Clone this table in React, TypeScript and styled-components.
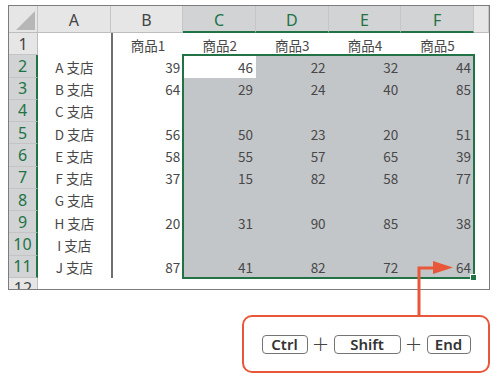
import React from 'react';
import styled, { createGlobalStyle } from 'styled-components';

const GREEN = '#217346';
const ORANGE = '#e9573b';

type Value = string | number | '';

const COLUMNS = ['A', 'B', 'C', 'D', 'E', 'F'];

const ROWS: Value[][] = [
  ['', '商品1', '商品2', '商品3', '商品4', '商品5'],
  ['A 支店', 39, 46, 22, 32, 44],
  ['B 支店', 64, 29, 24, 40, 85],
  ['C 支店', '', '', '', '', ''],
  ['D 支店', 56, 50, 23, 20, 51],
  ['E 支店', 58, 55, 57, 65, 39],
  ['F 支店', 37, 15, 82, 58, 77],
  ['G 支店', '', '', '', '', ''],
  ['H 支店', 20, 31, 90, 85, 38],
  ['I 支店', '', '', '', '', ''],
  ['J 支店', 87, 41, 82, 72, 64],
];

// selected range C2:F11 (column index 2..5, row 2..11), active cell C2
const inSelection = (row: number, col: number) => row >= 2 && row <= 11 && col >= 2;

const GlobalStyle = createGlobalStyle`
  html, body {
    margin: 0;
    padding: 0;
    background: #fff;
  }
  body {
    font-family: "Noto Sans", "Noto Sans CJK JP", sans-serif;
  }
`;

const Page = styled.div`
  position: relative;
  width: 500px;
  height: 385px;
  box-sizing: border-box;
  padding: 5px 10px 0 8px;
  display: flex;
  flex-direction: column;
`;

const Sheet = styled.div`
  position: relative;
  display: grid;
  grid-template-columns: 29px repeat(6, 72.67px) 1fr;
  grid-template-rows: 27px repeat(11, 22.27px) 1fr;
  height: 285px;
  box-sizing: border-box;
  border: 1px solid #7c7c7c;
  overflow: hidden;
  background: #fff;
  font-family: "Noto Sans CJK JP", sans-serif;
  color: #484848;
`;

const Corner = styled.div`
  display: flex;
  justify-content: flex-end;
  align-items: flex-end;
  padding: 0 2px 2px 0;
  background: #e6e6e6;
  border-right: 1px solid #c4c4c4;
  border-bottom: 1px solid #bdbdbd;

  &::after {
    content: '';
    width: 19px;
    height: 19px;
    background: #b7b7b7;
    clip-path: polygon(100% 0, 100% 100%, 0 100%);
  }
`;

const ColHead = styled.div<{ $active?: boolean }>`
  display: flex;
  align-items: center;
  justify-content: center;
  padding-top: 2px;
  font-family: "Noto Sans", sans-serif;
  font-size: 16px;
  background: ${p => (p.$active ? '#d2d3d4' : '#e6e6e6')};
  color: ${p => (p.$active ? GREEN : '#444')};
  border-right: 1px solid #c6c6c6;
  border-bottom: ${p => (p.$active ? `2px solid ${GREEN}` : '1px solid #bdbdbd')};
`;

const RowHead = styled.div<{ $active?: boolean }>`
  display: flex;
  align-items: center;
  justify-content: center;
  font-family: "Noto Sans", sans-serif;
  font-size: 16px;
  background: ${p => (p.$active ? '#d2d3d4' : '#e6e6e6')};
  color: ${p => (p.$active ? GREEN : '#444')};
  border-right: ${p => (p.$active ? `2px solid ${GREEN}` : '1px solid #bdbdbd')};
  border-bottom: 1px solid #c4c4c4;
`;

/* the last row is only partly in view */
const CutRowHead = styled(RowHead)`
  align-items: flex-start;
  line-height: 16px;
  padding-top: 2px;
`;

const Cell = styled.div<{ $align: 'center' | 'right'; $fill?: boolean; $edge?: boolean }>`
  display: flex;
  align-items: center;
  justify-content: ${p => (p.$align === 'right' ? 'flex-end' : 'center')};
  padding: 1px 3px 0 3px;
  font-size: 13.5px;
  background: ${p => (p.$fill ? '#c3c6c9' : '#fff')};
  border-left: ${p => (p.$edge ? '2px solid #6e6e6e' : 'none')};
`;

const Filler = styled.div`
  background: #fff;
  grid-column: 2 / -1;
`;

/* selection outline, laid over the grid area C2:F11 */
const Frame = styled.div`
  position: absolute;
  grid-column: 4 / 8;
  grid-row: 3 / 13;
  inset: -1px;
  border: 2px solid ${GREEN};
  pointer-events: none;
`;

const Handle = styled.span`
  position: absolute;
  right: -4px;
  bottom: -4px;
  width: 5px;
  height: 5px;
  background: ${GREEN};
  border: 1px solid #fff;
`;

const Callout = styled.div`
  align-self: flex-end;
  margin-top: 25px;
  width: 248px;
  height: 58px;
  box-sizing: border-box;
  border: 2px solid ${ORANGE};
  border-radius: 10px;
  display: flex;
  align-items: center;
  justify-content: center;
  padding-top: 1px;
`;

const Key = styled.span<{ $w: number }>`
  width: ${p => p.$w}px;
  height: 19px;
  box-sizing: border-box;
  border: 1.5px solid #747474;
  border-radius: 4px;
  display: flex;
  align-items: center;
  justify-content: center;
  font-family: "Noto Sans", sans-serif;
  font-weight: 600;
  font-size: 15px;
  color: #333;
  line-height: 1;
`;

const Plus = styled.span`
  width: 26px;
  display: flex;
  align-items: center;
  justify-content: center;
  height: 19px;
  font-family: "DejaVu Sans", sans-serif;
  font-size: 21px;
  font-weight: 300;
  color: #444;
  line-height: 1;
`;

const Connector = styled.svg`
  position: absolute;
  left: 0;
  top: 0;
  width: 500px;
  height: 385px;
  pointer-events: none;
`;

export default function App() {
  return (
    <>
      <GlobalStyle />
      <Page>
        <Sheet>
          <Corner />
          {COLUMNS.map((c, i) => (
            <ColHead key={c} $active={i >= 2}>{c}</ColHead>
          ))}
          <ColHead />

          {ROWS.map((row, r) => {
            const rowNo = r + 1;
            return (
              <React.Fragment key={rowNo}>
                <RowHead $active={rowNo >= 2}>{rowNo}</RowHead>
                {row.map((v, c) => (
                  <Cell
                    key={c}
                    $align={rowNo === 1 || c === 0 ? 'center' : 'right'}
                    $fill={inSelection(rowNo, c) && !(rowNo === 2 && c === 2)}
                    $edge={c === 1}
                  >
                    {v}
                  </Cell>
                ))}
                <Cell $align="center" />
              </React.Fragment>
            );
          })}

          <CutRowHead>12</CutRowHead>
          <Filler />

          <Frame>
            <Handle />
          </Frame>
        </Sheet>

        <Callout>
          <Key $w={46}>Ctrl</Key>
          <Plus>+</Plus>
          <Key $w={67}>Shift</Key>
          <Plus>+</Plus>
          <Key $w={44}>End</Key>
        </Callout>

        <Connector viewBox="0 0 500 385">
          <path d="M419 315 V268 H436" fill="none" stroke={ORANGE} strokeWidth="3" />
          <polygon points="433,261 453,267.5 433,274" fill={ORANGE} />
        </Connector>
      </Page>
    </>
  );
}
